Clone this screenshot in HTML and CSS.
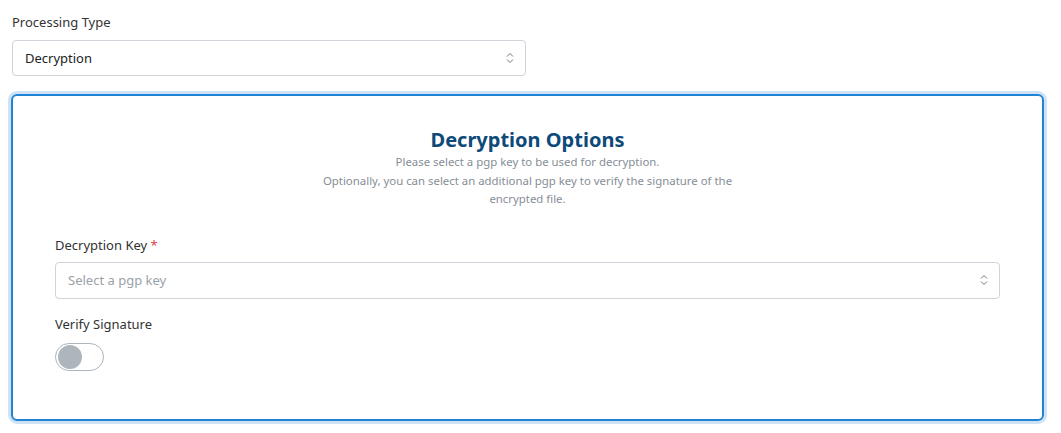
FILE: index.html
```html
<!DOCTYPE html>
<html>
<head>
<meta charset="utf-8">
<link rel="stylesheet" href="styles.css">
</head>
<body>
<div class="page">
  <div class="field top">
    <label class="label">Processing Type</label>
    <div class="select">
      <span class="value">Decryption</span>
      <svg class="chev" width="8" height="12" viewBox="0 0 8 12"><path d="M1 4.5 L4 1.5 L7 4.5 M1 7.5 L4 10.5 L7 7.5" fill="none" stroke="#6c757d" stroke-width="1"/></svg>
    </div>
  </div>
  <div class="card">
    <div class="head">
      <h2 class="title">Decryption Options</h2>
      <p class="desc">Please select a pgp key to be used for decryption.<br>Optionally, you can select an additional pgp key to verify the signature of the encrypted file.</p>
    </div>
    <div class="field">
      <label class="label">Decryption Key <span class="req">*</span></label>
      <div class="select">
        <span class="placeholder">Select a pgp key</span>
        <svg class="chev" width="8" height="12" viewBox="0 0 8 12"><path d="M1 4.5 L4 1.5 L7 4.5 M1 7.5 L4 10.5 L7 7.5" fill="none" stroke="#6c757d" stroke-width="1"/></svg>
      </div>
    </div>
    <div class="field">
      <label class="label">Verify Signature</label>
      <div class="toggle"><span class="knob"></span></div>
    </div>
  </div>
</div>
</body>
</html>
```

FILE: styles.css
```css
html, body { margin: 0; padding: 0; background: #fff; }
body {
  font-family: "Noto Sans", "Open Sans", sans-serif;
  font-size: 13px;
  color: #333;
}
.page { padding: 13px 17px 10px 12px; }
.field { display: flex; flex-direction: column; align-items: stretch; }
.field.top { width: 514px; margin-bottom: 18px; }
.field.top .label { margin-bottom: 9px; }
.label { font-size: 13px; color: #333; line-height: 18px; margin-bottom: 8px; }
.req { color: #e0474c; }
.select {
  height: 34px;
  border: 1px solid #ced4da;
  border-radius: 4px;
  display: flex;
  align-items: center;
  justify-content: space-between;
  padding: 0 11px 0 12px;
  font-size: 13px;
}
.card .select { height: 35px; }
.value { color: #222; }
.placeholder { color: #9aa1a8; }
.chev { display: block; }
.card {
  margin-left: -1px;
  border: 2px solid #1f84d6;
  border-radius: 6px;
  box-shadow: 0 0 0 3px #cfe3f4;
  padding: 31px 42px 48px 42px;
}
.head { text-align: center; margin-bottom: 27px; }
.title {
  margin: 0;
  font-size: 20px;
  font-weight: 700;
  color: #0d4a79;
  line-height: 26px;
}
.desc {
  margin: 0 auto;
  max-width: 440px;
  font-size: 11.4px;
  color: #868e96;
  line-height: 18.5px;
}
.card .field + .field { margin-top: 16px; }
.toggle {
  margin-top: 2px;
  width: 47px;
  height: 26px;
  border: 1px solid #adb5bd;
  border-radius: 14px;
  position: relative;
}
.knob {
  position: absolute;
  left: 2px;
  top: 1px;
  width: 24px;
  height: 24px;
  border-radius: 50%;
  background: #adb5bd;
}
```
